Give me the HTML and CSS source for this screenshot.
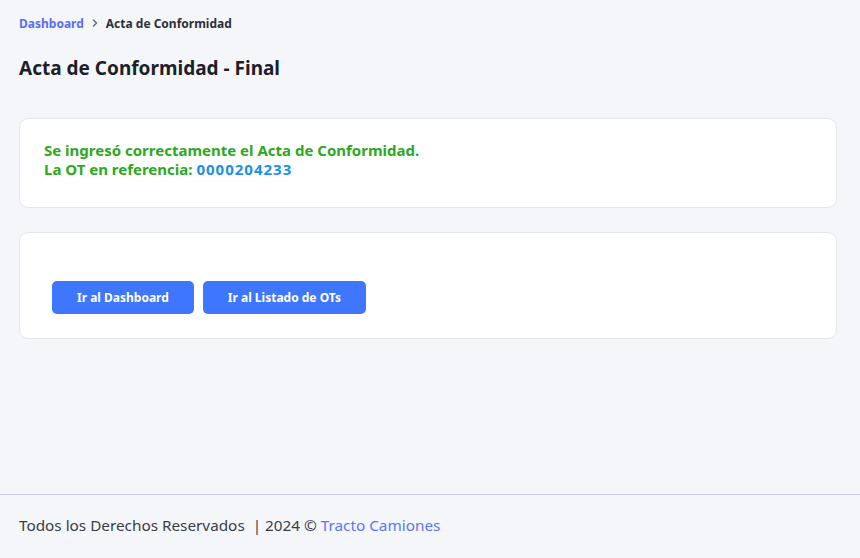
FILE: index.html
```html
<!DOCTYPE html>
<html lang="es">
<head>
<meta charset="utf-8">
<title>Acta de Conformidad - Final</title>
<link rel="stylesheet" href="styles.css">
</head>
<body>
<div class="page">
  <main class="content">
    <nav class="breadcrumb">
      <a class="crumb-link" href="#">Dashboard</a>
      <svg class="crumb-sep" width="6" height="8" viewBox="0 0 6 8"><path d="M1.5 1 L4.5 4 L1.5 7" fill="none" stroke="#6b7280" stroke-width="1.6" stroke-linecap="round" stroke-linejoin="round"/></svg>
      <span class="crumb-current">Acta de Conformidad</span>
    </nav>
    <h1 class="title">Acta de Conformidad - Final</h1>
    <section class="card card-msg">
      <p class="msg">Se ingresó correctamente el Acta de Conformidad.</p>
      <p class="msg">La OT en referencia: <span class="ot">0000204233</span></p>
    </section>
    <section class="card card-actions">
      <a class="btn" href="#">Ir al Dashboard</a>
      <a class="btn" href="#">Ir al Listado de OTs</a>
    </section>
  </main>
  <footer class="footer">
    <span>Todos los Derechos Reservados &nbsp;| 2024 © <a class="footer-link" href="#">Tracto Camiones</a></span>
  </footer>
</div>
</body>
</html>
```

FILE: styles.css
```css
* { box-sizing: border-box; }
html, body { margin: 0; padding: 0; }
body {
  background: #f5f6fa;
  font-family: "Noto Sans", "DejaVu Sans", sans-serif;
  color: #1f2330;
}
.page {
  min-height: 558px;
  display: flex;
  flex-direction: column;
}
.content {
  flex: 1;
  padding: 14px 23px 0 19px;
}
.breadcrumb {
  display: flex;
  align-items: center;
  gap: 8px;
  font-size: 12px;
  font-weight: 700;
  height: 18px;
}
.crumb-link { color: #5b6cf9; text-decoration: none; }
.crumb-current { color: #2c303b; }
.title {
  margin: 22px 0 0;
  font-size: 19px;
  font-weight: 700;
  line-height: 28px;
  color: #1c1f29;
}
.card {
  background: #fff;
  border: 1px solid #e4e7ee;
  border-radius: 9px;
}
.card-msg {
  margin-top: 36px;
  height: 90px;
  padding: 22px 24px;
}
.msg {
  margin: 0;
  font-size: 15px;
  font-weight: 700;
  line-height: 19px;
  color: #2ea81f;
}
.ot { color: #1d8fe6; letter-spacing: 1px; }
.card-actions {
  margin-top: 24px;
  height: 107px;
  padding: 48px 32px 0;
  display: flex;
  gap: 9px;
  align-items: flex-start;
}
.btn {
  display: inline-flex;
  align-items: center;
  justify-content: center;
  height: 33px;
  padding: 0 25px;
  background: #3f76fe;
  color: #fff;
  font-size: 12px;
  font-weight: 700;
  border-radius: 5px;
  text-decoration: none;
}
.footer {
  border-top: 1px solid #ccd1df;
  height: 64px;
  padding: 0 19px 3px;
  display: flex;
  align-items: center;
  font-size: 15.3px;
  color: #3a3d46;
}
.footer-link { color: #5a76fb; text-decoration: none; }
```
